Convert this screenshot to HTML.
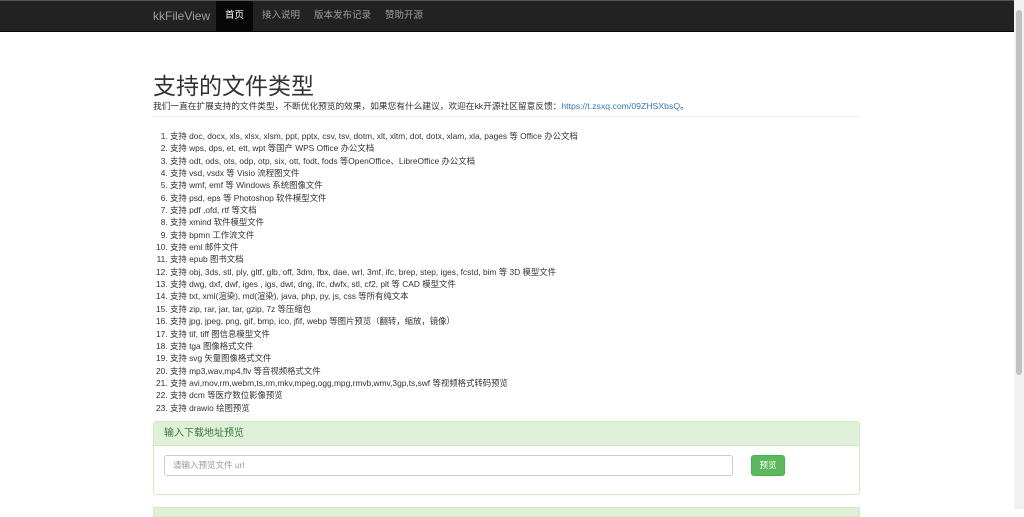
<!DOCTYPE html>
<html><head><meta charset="utf-8"><style>
*{box-sizing:border-box}
body{margin:0;width:1024px;height:509px;overflow:hidden;background:#fff;font-family:"Liberation Sans","Noto Sans CJK SC",sans-serif;color:#333;font-size:9px;position:relative}
.nav{position:absolute;left:0;top:0;width:1014px;height:32px;background:#222;border-bottom:1px solid #080808;border-top:1px solid #555}
.nav a{position:absolute;top:0;height:31px;line-height:30px;color:#9d9d9d;font-size:9.5px;text-decoration:none}
.brand{font-size:12px!important;left:153px}
.act{background:#080808;color:#fff!important;padding:0 9px}
.sb{position:absolute;right:0;top:0;width:10px;height:509px;background:#f1f1f1}
.sb div{position:absolute;left:2px;top:10px;width:6px;height:365px;background:#c1c1c1;border-radius:3px}
h1{position:absolute;left:153px;top:67px;margin:0;font-size:23px;font-weight:normal;color:#333}
.sub{position:absolute;left:153px;top:99px;font-size:8.7px}
.sub a{color:#337ab7;text-decoration:none}
.hr{position:absolute;left:153px;top:116px;width:707px;border-top:1px solid #eee}
ol{position:absolute;left:153px;top:130px;margin:0;padding-left:17px;font-size:8.4px;line-height:12.35px}
.panel{position:absolute;left:153px;top:421px;width:707px;height:74px;border:1px solid #d6e9c6;border-radius:3px}
.ph{height:24px;background:#dff0d8;color:#3c763d;font-size:10px;line-height:23px;padding-left:10px;border-bottom:1px solid #d6e9c6}
.inp{position:absolute;left:10px;top:33px;width:569px;height:21px;border:1px solid #ccc;border-radius:3px;color:#999;font-size:8.5px;line-height:19px;padding-left:8px}
.btn{position:absolute;left:597px;top:33px;width:34px;height:21px;background:#5cb85c;border:1px solid #4cae4c;border-radius:3px;color:#fff;font-size:8.5px;line-height:19px;text-align:center}
.p2{position:absolute;left:153px;top:507px;width:707px;height:10px;background:#dff0d8;border:1px solid #d6e9c6}
</style></head><body>
<div class="nav">
<a class="brand">kkFileView</a>
<a class="act" style="left:216px">首页</a>
<a style="left:262px">接入说明</a>
<a style="left:314px">版本发布记录</a>
<a style="left:385px">赞助开源</a>
</div>
<h1>支持的文件类型</h1>
<div class="sub">我们一直在扩展支持的文件类型，不断优化预览的效果，如果您有什么建议，欢迎在kk开源社区留意反馈：<a>https://t.zsxq.com/09ZHSXbsQ</a>。</div>
<div class="hr"></div>
<ol>
<li>支持 doc, docx, xls, xlsx, xlsm, ppt, pptx, csv, tsv, dotm, xlt, xltm, dot, dotx, xlam, xla, pages 等 Office 办公文档</li>
<li>支持 wps, dps, et, ett, wpt 等国产 WPS Office 办公文档</li>
<li>支持 odt, ods, ots, odp, otp, six, ott, fodt, fods 等OpenOffice、LibreOffice 办公文档</li>
<li>支持 vsd, vsdx 等 Visio 流程图文件</li>
<li>支持 wmf, emf 等 Windows 系统图像文件</li>
<li>支持 psd, eps 等 Photoshop 软件模型文件</li>
<li>支持 pdf ,ofd, rtf 等文档</li>
<li>支持 xmind 软件模型文件</li>
<li>支持 bpmn 工作流文件</li>
<li>支持 eml 邮件文件</li>
<li>支持 epub 图书文档</li>
<li>支持 obj, 3ds, stl, ply, gltf, glb, off, 3dm, fbx, dae, wrl, 3mf, ifc, brep, step, iges, fcstd, bim 等 3D 模型文件</li>
<li>支持 dwg, dxf, dwf, iges , igs, dwt, dng, ifc, dwfx, stl, cf2, plt 等 CAD 模型文件</li>
<li>支持 txt, xml(渲染), md(渲染), java, php, py, js, css 等所有纯文本</li>
<li>支持 zip, rar, jar, tar, gzip, 7z 等压缩包</li>
<li>支持 jpg, jpeg, png, gif, bmp, ico, jfif, webp 等图片预览（翻转，缩放，镜像）</li>
<li>支持 tif, tiff 图信息模型文件</li>
<li>支持 tga 图像格式文件</li>
<li>支持 svg 矢量图像格式文件</li>
<li>支持 mp3,wav,mp4,flv 等音视频格式文件</li>
<li>支持 avi,mov,rm,webm,ts,rm,mkv,mpeg,ogg,mpg,rmvb,wmv,3gp,ts,swf 等视频格式转码预览</li>
<li>支持 dcm 等医疗数位影像预览</li>
<li>支持 drawio 绘图预览</li>
</ol>
<div class="panel"><div class="ph">输入下载地址预览</div>
<div class="inp">请输入预览文件 url</div><div class="btn">预览</div></div>
<div class="p2"></div>
<div class="sb"><div></div></div>
</body></html>
